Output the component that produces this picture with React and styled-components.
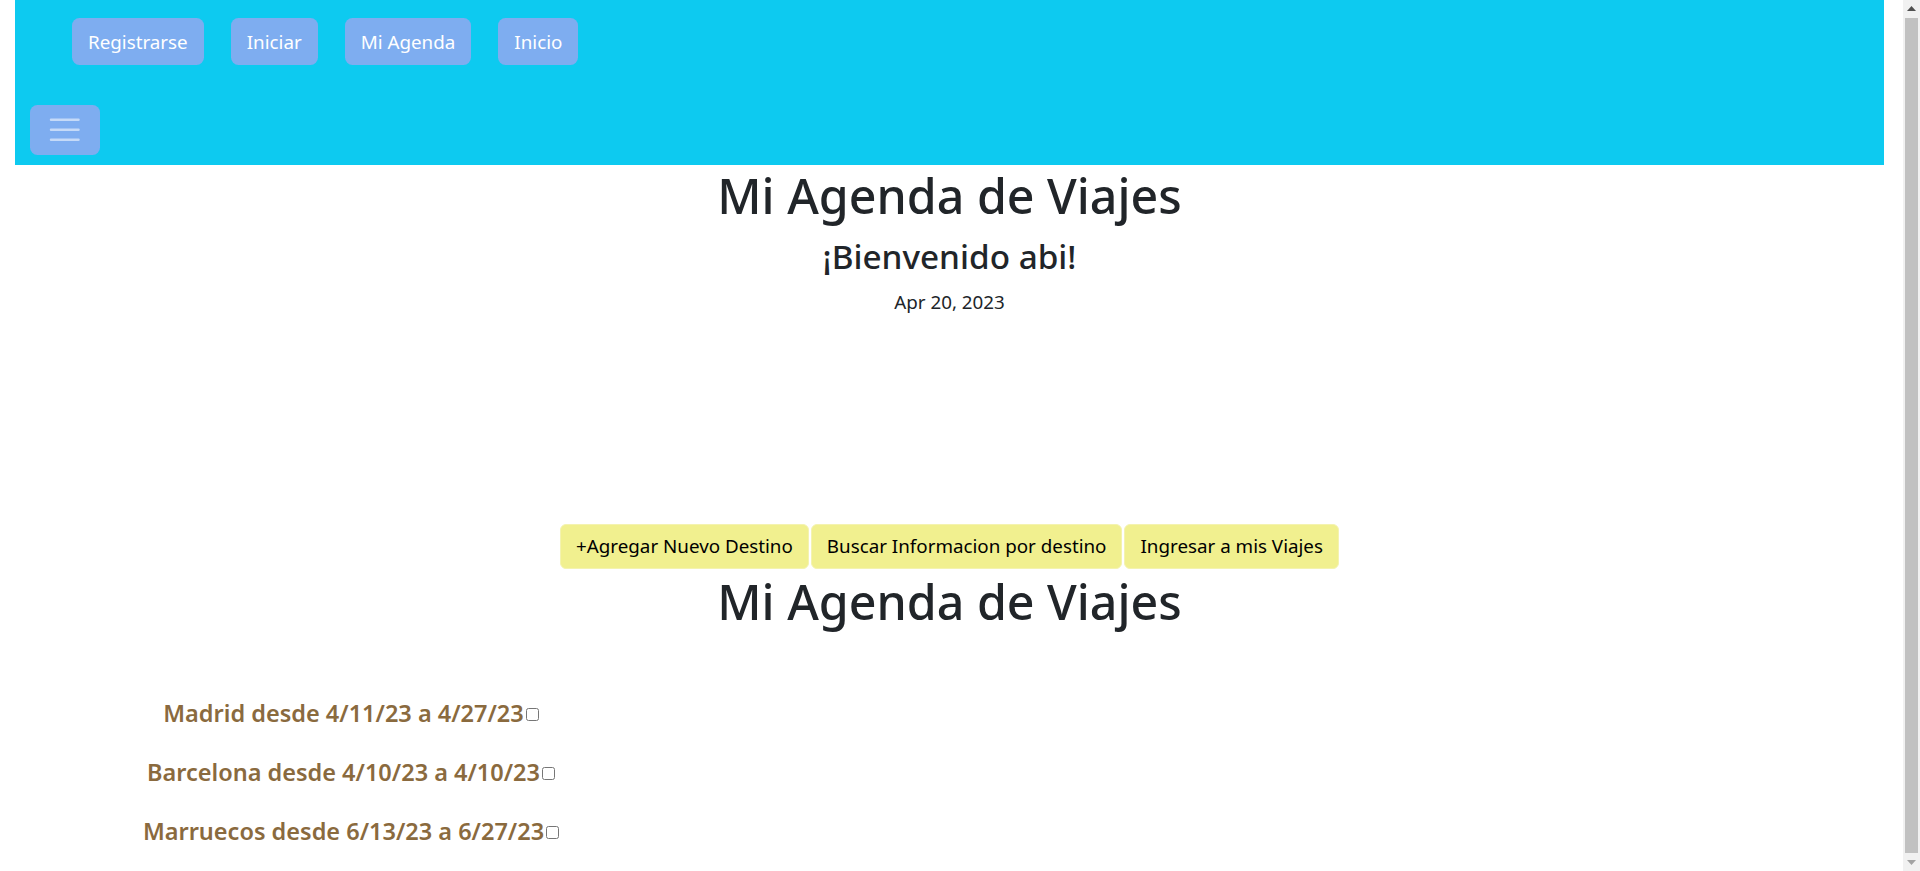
import React from 'react';
import styled, { createGlobalStyle } from 'styled-components';

const GlobalStyle = createGlobalStyle`
  body {
    margin: 0;
    font-family: "Noto Sans", "Open Sans", sans-serif;
    color: #212529;
    background: #fff;
  }
`;

const Page = styled.div`
  margin: 0 36px 0 15px;
`;

const Navbar = styled.nav`
  background-color: #0dcaf0;
  display: flex;
  flex-direction: column;
  align-items: flex-start;
  padding: 18px 0 10px 15px;
`;

const NavItems = styled.div`
  display: flex;
  gap: 27px;
  margin-left: 42px;
`;

const NavButton = styled.a`
  display: inline-block;
  background-color: #7eadf0;
  color: #fff;
  font-size: 18.8px;
  line-height: 30px;
  padding: 7.5px 15px;
  border: 1.25px solid transparent;
  border-radius: 7.5px;
  text-decoration: none;
  cursor: pointer;
`;

const Toggler = styled.button`
  margin-top: 40px;
  background-color: #7eadf0;
  border: 1.25px solid transparent;
  border-radius: 7.5px;
  padding: 5px 15px;
  display: flex;
  align-items: center;
  cursor: pointer;
`;

const Title = styled.h1`
  margin: ${({ top }) => top || 0}px 0 10px;
  font-size: 48.3px;
  font-weight: 500;
  line-height: 60px;
  text-align: center;
`;

const Welcome = styled.h3`
  margin: 3px 0 10px;
  font-size: 33.3px;
  font-weight: 500;
  line-height: 42px;
  text-align: center;
`;

const DateText = styled.p`
  margin: 5px 0 0;
  font-size: 18.8px;
  line-height: 30px;
  text-align: center;
`;

const Spacer = styled.div`
  height: ${({ h }) => h}px;
`;

const Actions = styled.div`
  display: flex;
  justify-content: center;
  gap: 2px;
`;

const ActionButton = styled.button`
  background-color: #f1f08f;
  color: #000;
  font-family: inherit;
  font-size: 18.8px;
  line-height: 30px;
  padding: 6.75px 15px;
  border: 1.25px solid #f4f3b0;
  border-radius: 6px;
  cursor: pointer;
`;

const TripsGrid = styled.div`
  display: grid;
  grid-template-columns: 672px 1fr;
  padding-top: 57px;
  padding-bottom: 40px;
`;

const TripList = styled.div`
  display: flex;
  flex-direction: column;
  align-items: center;
  gap: 29px;
`;

const Trip = styled.h5`
  margin: 0;
  font-size: 23.5px;
  font-weight: 600;
  line-height: 30px;
  color: #8a6a3e;
  display: flex;
  align-items: center;
`;

const Check = styled.input`
  width: 13px;
  height: 13px;
  margin: 2px 0 0 2px;
`;

/* window scrollbar as seen in the screenshot */
const ScrollTrack = styled.div`
  position: fixed;
  top: 0;
  right: 0;
  bottom: 0;
  width: 17px;
  background: #f1f1f1;
  display: flex;
  flex-direction: column;
  align-items: center;
`;

const ScrollArrow = styled.div`
  height: 17px;
  width: 17px;
  display: flex;
  align-items: center;
  justify-content: center;
`;

const ScrollThumb = styled.div`
  flex: 1;
  width: 13px;
  margin: 1px 0;
  background: #c1c1c1;
`;

const trips = [
  'Madrid desde 4/11/23 a 4/27/23',
  'Barcelona desde 4/10/23 a 4/10/23',
  'Marruecos desde 6/13/23 a 6/27/23',
];

const App = () => {
  return (
    <>
      <GlobalStyle />
      <Page>
        <Navbar>
          <NavItems>
            <NavButton>Registrarse</NavButton>
            <NavButton>Iniciar</NavButton>
            <NavButton>Mi Agenda</NavButton>
            <NavButton>Inicio</NavButton>
          </NavItems>
          <Toggler aria-label="menu">
            <svg width="37.5" height="37.5" viewBox="0 0 30 30">
              <path
                d="M4 7h22M4 15h22M4 23h22"
                stroke="rgba(255,255,255,0.55)"
                strokeWidth="2"
                strokeLinecap="round"
                strokeMiterlimit="10"
              />
            </svg>
          </Toggler>
        </Navbar>

        <Title>Mi Agenda de Viajes</Title>
        <Welcome>¡Bienvenido abi!</Welcome>
        <DateText>Apr 20, 2023</DateText>
        <Spacer h={207} />

        <Actions>
          <ActionButton>+Agregar Nuevo Destino</ActionButton>
          <ActionButton>Buscar Informacion por destino</ActionButton>
          <ActionButton>Ingresar a mis Viajes</ActionButton>
        </Actions>
        <Title top={2}>Mi Agenda de Viajes</Title>

        <TripsGrid>
          <TripList>
            {trips.map((t) => (
              <Trip key={t}>
                {t}
                <Check type="checkbox" />
              </Trip>
            ))}
          </TripList>
        </TripsGrid>
      </Page>

      <ScrollTrack>
        <ScrollArrow>
          <svg width="9" height="5" viewBox="0 0 9 5">
            <path d="M0 5L4.5 0L9 5Z" fill="#505050" />
          </svg>
        </ScrollArrow>
        <ScrollThumb />
        <ScrollArrow>
          <svg width="9" height="5" viewBox="0 0 9 5">
            <path d="M0 0L4.5 5L9 0Z" fill="#a3a3a3" />
          </svg>
        </ScrollArrow>
      </ScrollTrack>
    </>
  );
};

export default App;
